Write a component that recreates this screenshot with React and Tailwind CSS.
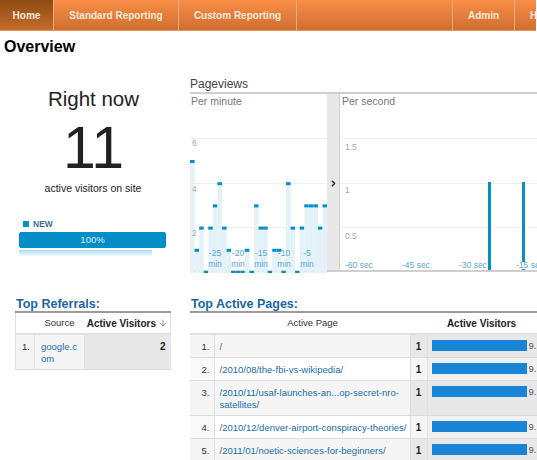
import { ArrowDown, ChevronRight } from "lucide-react";

const perMinute = [5, 1, 2, 0, 2, 3, 4, 2, 1, 0, 0, 0, 1, 0, 3, 2, 2, 0, 1, 1, 0, 4, 2, 0, 2, 3, 3, 3, 2, 3];
const minuteTicks = [
  { label: "-25", x: 25 },
  { label: "-20", x: 48 },
  { label: "-15", x: 71 },
  { label: "-10", x: 94 },
  { label: "-5", x: 117 },
];
const secondTicks = [
  { label: "-60 sec", x: 5 },
  { label: "-45 sec", x: 62 },
  { label: "-30 sec", x: 119 },
  { label: "-15 sec", x: 176 },
];
const pages = [
  { path: "/", h: "h-[23px]" },
  { path: "/2010/08/the-fbi-vs-wikipedia/", h: "h-[23px]" },
  { path: "/2010/11/usaf-launches-an...op-secret-nro-satellites/", h: "h-[35px]" },
  { path: "/2010/12/denver-airport-conspiracy-theories/", h: "h-[23px]" },
  { path: "/2011/01/noetic-sciences-for-beginners/", h: "h-[23px]" },
];

function MinuteChart() {
  return (
    <svg width="137" height="135" viewBox="0 0 137 135" className="block">
      {[0, 45, 89].map((y) => (
        <rect key={y} x="0" y={y} width="137" height="1" fill="#efefef" />
      ))}
      {perMinute.map((v, i) => {
        const top = 133 - v * 22.2;
        return (
          <g key={i}>
            <rect x={i * 4.57} y={top} width="4.57" height={135 - top} fill="#e3f1f8" />
            <rect x={i * 4.57} y={top} width="4.57" height="3" fill="#068ec9" />
          </g>
        );
      })}
    </svg>
  );
}

function Nav() {
  const tab = "flex h-full items-center border-r border-[#f5ab7a] text-[10px] font-bold text-[#fde9da]";
  return (
    <div className="mr-[1px] flex h-[31px] bg-gradient-to-b from-[#fa8d47] to-[#cf6f30] border-b border-[#e8935a]">
      <div className={`${tab} w-[54px] justify-center bg-gradient-to-b from-[#8c4c14] to-[#c66c2c]`}>Home</div>
      <div className={`${tab} w-[125px] justify-center`}>Standard Reporting</div>
      <div className={`${tab} w-[118px] justify-center`}>Custom Reporting</div>
      <div className={`${tab} flex-1`} />
      <div className={`${tab} w-[62px] justify-center`}>Admin</div>
      <div className="flex h-full w-[21px] items-center pl-[15px] text-[10px] font-bold text-[#fde9da]">H</div>
    </div>
  );
}

export default function App() {
  return (
    <div className="relative h-[460px] w-[537px] overflow-hidden bg-white font-['Liberation_Sans',sans-serif] text-[#333]">
      <Nav />
      <h1 className="pl-1 pt-[7px] text-[16px] font-bold leading-[18px] text-black">Overview</h1>

      <div className="mt-[21px] flex">
        <div className="w-[190px] shrink-0">
          <div className="w-[187px] pt-[10px] text-center text-[20.5px] leading-[24px] text-[#222]">Right now</div>
          <div className="w-[187px] pt-[6px] text-center text-[59px] leading-[62px] text-[#222]">11</div>
          <div className="w-[186px] pt-[2px] text-center text-[10.5px] leading-[14px] text-[#222]">active visitors on site</div>

          <div className="flex items-center gap-[4px] pl-[23px] pt-[24px] text-[8.5px] font-bold leading-[10px] text-[#3d6f96]">
            <span className="h-[6px] w-[6px] bg-[#068ec9]" />
            NEW
          </div>
          <div className="ml-[19px] mt-[3px] flex h-[16px] w-[147px] items-center justify-center rounded-[2px] bg-[#068ec9] text-[9.5px] text-[#d8eef8]">
            100%
          </div>
          <div className="ml-[19px] mt-[2px] h-[7px] w-[133px] bg-gradient-to-b from-[#a9dcf2] to-white" />
        </div>

        <div className="w-[347px] shrink-0">
          <div className="text-[12px] leading-[14px] text-[#444]">Pageviews</div>
          <div className="mt-[1px] flex h-[180px] border-y-2 border-[#cfcfcf]">
            <div className="relative w-[137px] shrink-0">
              <div className="h-[44px] pl-[1px] text-[10.5px] leading-[14px] text-[#777]">Per minute</div>
              <MinuteChart />
              {[
                { t: "6", y: 44 },
                { t: "4", y: 90 },
                { t: "2", y: 134 },
              ].map((l) => (
                <span key={l.t} style={{ top: l.y }} className="absolute left-[2px] text-[8.5px] leading-[10px] text-[#aaa]">
                  {l.t}
                </span>
              ))}
              {minuteTicks.map((t) => (
                <span key={t.label} style={{ left: t.x - 11 }} className="absolute top-[154px] w-[22px] text-center text-[8.5px] leading-[11px] text-[#5aa7d4]">
                  {t.label}
                  <br />
                  min
                </span>
              ))}
            </div>
            <div className="flex w-[13px] shrink-0 items-center justify-center border-r border-[#cfcfcf] bg-[#e8e8e8] pt-[2px]">
              <ChevronRight size={9} strokeWidth={4} className="text-[#222]" />
            </div>
            <div className="relative flex-1">
              <div className="h-[44px] pl-[2px] text-[10.5px] leading-[14px] text-[#777]">Per second</div>
              {[44, 89, 133].map((y) => (
                <div key={y} style={{ top: y }} className="absolute inset-x-0 h-px bg-[#efefef]" />
              ))}
              {[
                { t: "1.5", y: 48 },
                { t: "1", y: 91 },
                { t: "0.5", y: 137 },
              ].map((l) => (
                <span key={l.t} style={{ top: l.y }} className="absolute left-[5px] text-[8.5px] leading-[10px] text-[#aaa]">
                  {l.t}
                </span>
              ))}
              <div className="absolute bottom-0 left-[148px] top-[88px] w-[3px] bg-[#068ec9]" />
              <div className="absolute bottom-0 left-[182px] top-[88px] w-[3px] bg-[#068ec9]" />
              {secondTicks.map((t) => (
                <span key={t.label} style={{ left: t.x }} className="absolute top-[168px] whitespace-nowrap bg-white text-[8.5px] leading-[7px] text-[#5aa7d4]">
                  {t.label}
                </span>
              ))}
            </div>
          </div>
        </div>
      </div>

      <div className="mt-[24px] flex">
        <div className="ml-[15px] w-[155px] shrink-0">
          <h2 className="pl-[1px] pt-[1px] text-[12.5px] font-bold leading-[14px] text-[#1a66a5]">Top Referrals:</h2>
          <table className="w-[155px] table-fixed border-collapse border-t-2 border-[#9a9a9a] text-[9.5px]">
            <colgroup>
              <col className="w-[19px]" />
              <col className="w-[50px]" />
              <col className="w-[86px]" />
            </colgroup>
            <thead>
              <tr className="h-[22px] border-b-2 border-[#e0e0e0]">
                <th className="border-l border-[#e0e0e0]" />
                <th className="pt-[1px] font-normal text-[#333]">Source</th>
                <th className="whitespace-nowrap border-r border-[#e0e0e0] pr-[2px] pt-[1px] text-right text-[10px] font-bold text-[#222]">
                  Active Visitors
                  <ArrowDown size={10} className="ml-[2px] inline align-[-1px] text-[#777]" />
                </th>
              </tr>
            </thead>
            <tbody>
              <tr className="h-[35px] border-b border-[#dcdcdc] align-top">
                <td className="border-x border-[#e0e0e0] bg-[#f5f5f5] pl-[6px] pt-[6px] leading-[12px]">1.</td>
                <td className="break-all border-r border-[#e0e0e0] bg-[#f5f5f5] pl-[6px] pr-[6px] pt-[6px] leading-[12px] text-[#1a6ea8]">google.com</td>
                <td className="bg-[#e8e8e8] pr-[5px] pt-[6px] text-right text-[10px] font-bold leading-[12px] text-[#222]">2</td>
              </tr>
            </tbody>
          </table>
        </div>

        <div className="ml-[20px] w-[347px] shrink-0">
          <h2 className="pl-[1px] pt-[1px] text-[12.5px] font-bold leading-[14px] text-[#1a66a5]">Top Active Pages:</h2>
          <table className="w-[347px] table-fixed border-collapse border-t-2 border-[#9a9a9a] text-[9.5px]">
            <colgroup>
              <col className="w-[24px]" />
              <col className="w-[196px]" />
              <col className="w-[17px]" />
              <col className="w-[110px]" />
            </colgroup>
            <thead>
              <tr className="h-[22px] border-b-2 border-[#e0e0e0]">
                <th colSpan={2} className="pl-[25px] pt-[1px] font-normal text-[#333]">Active Page</th>
                <th colSpan={2} className="pl-[16px] pt-[1px] text-[10px] font-bold text-[#222]">Active Visitors</th>
              </tr>
            </thead>
            <tbody>
              {pages.map((p, i) => (
                <tr key={p.path} className={`${p.h} border-b border-[#dcdcdc] align-top`}>
                  <td className={`border-r border-[#e0e0e0] pr-[4px] pt-[6px] text-right leading-[12px] ${i % 2 === 0 ? "bg-[#f5f5f5]" : "bg-[#f9f9f9]"}`}>{i + 1}.</td>
                  <td className={`border-r border-[#e0e0e0] pl-[5px] pt-[6px] leading-[12px] text-[#1a6ea8] ${i % 2 === 0 ? "bg-[#f5f5f5]" : "bg-white"}`}>{p.path}</td>
                  <td className={`border-r border-[#e0e0e0] pt-[6px] text-center text-[10px] font-bold leading-[12px] text-[#222] ${i % 2 === 0 ? "bg-[#e8e8e8]" : "bg-[#f5f5f5]"}`}>1</td>
                  <td className={`whitespace-nowrap pt-[5px] ${i % 2 === 0 ? "bg-[#e8e8e8]" : "bg-[#f0f0f0]"}`}>
                    <div className="flex items-center gap-[2px] overflow-hidden pl-[4px] leading-[11px] text-[#555]">
                      <span className="h-[11px] w-[95px] shrink-0 bg-[#1a85d6]" />
                      9.
                    </div>
                  </td>
                </tr>
              ))}
            </tbody>
          </table>
        </div>
      </div>
    </div>
  );
}
